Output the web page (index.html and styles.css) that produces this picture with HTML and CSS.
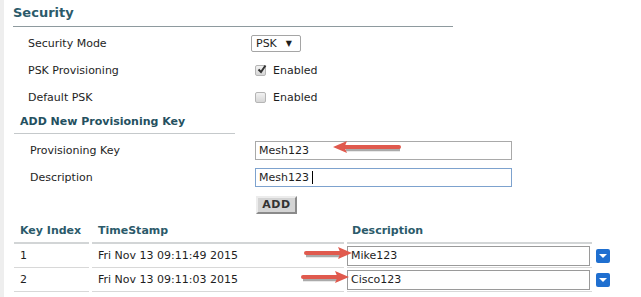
FILE: index.html
```html
<!DOCTYPE html>
<html lang="en">
<head>
    <meta charset="UTF-8">
    <title>Mesh - Security</title>
    <link rel="stylesheet" href="styles.css">
</head>
<body>
    <div class="page">
        <div class="section">
            <h2>Security</h2>
            <div class="form">
                <div class="row">
                    <span class="label">Security Mode</span>
                    <span class="select">PSK <span class="caret">&#9660;</span></span>
                </div>
                <div class="row">
                    <span class="label">PSK Provisioning</span>
                    <label class="check"><span class="box checked"><svg viewBox="0 0 12 12" width="12" height="12"><path d="M2.5 6.5 L5 9 L9.5 2.5" fill="none" stroke="#333" stroke-width="2"/></svg></span>Enabled</label>
                </div>
                <div class="row">
                    <span class="label">Default PSK</span>
                    <label class="check"><span class="box"></span>Enabled</label>
                </div>
            </div>
        </div>

        <div class="subsection">
            <h3>ADD New Provisioning Key</h3>
            <div class="form sub">
                <div class="row">
                    <span class="label">Provisioning Key</span>
                    <span class="input">Mesh123</span>
                </div>
                <div class="row">
                    <span class="label">Description</span>
                    <span class="input focused">Mesh123 <span class="cursor"></span></span>
                </div>
                <div class="row">
                    <span class="label"></span>
                    <span class="button">ADD</span>
                </div>
            </div>
        </div>

        <div class="keys">
            <div class="th">Key Index</div>
            <div class="th">TimeStamp</div>
            <div class="th">Description</div>
            <div class="blank"></div>

            <div class="td">1</div>
            <div class="td">Fri Nov 13 09:11:49 2015</div>
            <div class="td"><span class="input cell">Mike123</span></div>
            <div class="more"><span class="drop"></span></div>

            <div class="td">2</div>
            <div class="td">Fri Nov 13 09:11:03 2015</div>
            <div class="td"><span class="input cell">Cisco123</span></div>
            <div class="more"><span class="drop"></span></div>
        </div>

        <!-- annotation arrows -->
        <svg class="arrow arrow-left" width="72" height="16" viewBox="0 0 72 16">
            <path d="M14 9.5 L68 9.5" stroke="#444" stroke-width="3.5" opacity="0.45"/>
            <path d="M11 7 L67 7" stroke="#e05a4e" stroke-width="4" stroke-linecap="round"/>
            <path d="M1 7 L15 1 L12.5 7 L15 13 Z" fill="#e05a4e"/>
        </svg>
        <svg class="arrow arrow-r1" width="50" height="16" viewBox="0 0 50 16">
            <path d="M3 9.5 L38 9.5" stroke="#444" stroke-width="3.5" opacity="0.45"/>
            <path d="M3 7 L38 7" stroke="#e05a4e" stroke-width="4" stroke-linecap="round"/>
            <path d="M49 7 L35 1 L37.5 7 L35 13 Z" fill="#e05a4e"/>
        </svg>
        <svg class="arrow arrow-r2" width="50" height="16" viewBox="0 0 50 16">
            <path d="M3 9.5 L38 9.5" stroke="#444" stroke-width="3.5" opacity="0.45"/>
            <path d="M3 7 L38 7" stroke="#e05a4e" stroke-width="4" stroke-linecap="round"/>
            <path d="M49 7 L35 1 L37.5 7 L35 13 Z" fill="#e05a4e"/>
        </svg>
    </div>
</body>
</html>
```

FILE: styles.css
```css
body {
    margin: 0;
    background-color: #fff;
    font-family: "DejaVu Sans", Verdana, sans-serif;
    font-size: 11px;
    color: #1e1e1e;
}

.page {
    position: relative;
    width: 637px;
    height: 297px;
    border-left: 4px solid #eeeeee;
}

.section {
    margin-left: 9px;
    width: 440px;
}

h2 {
    margin: 0;
    padding: 5px 0 5px 0;
    font-size: 13px;
    line-height: 16px;
    color: #2b5a6a;
    border-bottom: 1px solid #8e9a9e;
}

.form {
    display: grid;
    grid-template-columns: 223px 1fr;
    padding: 3px 0 0 15px;
}

.row {
    display: contents;
}

.row > * {
    height: 27px;
    display: flex;
    align-items: center;
}

.select {
    align-self: center;
    height: 17px !important;
    width: 50px;
    border: 1px solid #a5a5a5;
    border-radius: 2px;
    padding-left: 4px;
    box-sizing: border-box;
    gap: 9px;
}

.caret {
    font-size: 8px;
}

.check {
    gap: 7px;
    padding-left: 4px;
}

.box {
    width: 11px;
    height: 11px;
    border: 1px solid #b5b5b5;
    border-radius: 2px;
    background: linear-gradient(#f2f2f2, #d6d6d6);
    box-sizing: border-box;
    display: flex;
    align-items: center;
    justify-content: center;
}

.box svg {
    margin: -3px -3px 0 0;
}

.subsection {
    margin: 1px 0 0 10px;
}

h3 {
    margin: 0;
    width: 215px;
    padding: 3px 0 4px 6px;
    font-size: 11px;
    line-height: 14px;
    color: #24505f;
    border-bottom: 1px solid #c5c9cb;
}

.form.sub {
    grid-template-columns: 225px 1fr;
    padding: 3px 0 0 16px;
}

.input {
    align-self: center;
    width: 257px;
    height: 19px !important;
    border: 1px solid #a9a9a9;
    padding-left: 3px;
    box-sizing: border-box;
    white-space: pre;
}

.input.focused {
    border-color: #7da2ce;
}

.cursor {
    width: 1px;
    height: 13px;
    background: #000;
}

.button {
    align-self: center;
    justify-content: center;
    width: 41px;
    height: 18px !important;
    box-sizing: border-box;
    margin-left: 1px;
    background: #d4d4d4;
    border: 2px solid;
    border-color: #ececec #8a8a8a #8a8a8a #ececec;
    font-weight: bold;
    color: #333;
    letter-spacing: 0.5px;
}

.keys {
    display: grid;
    grid-template-columns: 75px 252px 245px 20px;
    column-gap: 3px;
    margin: 1px 0 0 10px;
}

.th {
    height: 23px;
    padding: 0 6px;
    display: flex;
    align-items: center;
    font-weight: bold;
    color: #2b5a6a;
    border-bottom: 2px solid #d2d5d6;
}

.th:nth-child(3) {
    padding-left: 5px;
}

.blank {
    height: 23px;
}

.td {
    height: 23px;
    padding: 0 6px;
    display: flex;
    align-items: center;
    border-bottom: 1px solid #d8d8d8;
}

.td:has(.cell) {
    padding: 0;
}

.input.cell {
    width: 243px;
    height: 20px !important;
    display: flex;
    align-items: center;
    border-color: #9a9a9a;
}

.more {
    display: flex;
    align-items: center;
    padding-left: 1px;
}

.drop {
    width: 14px;
    height: 14px;
    border-radius: 2px;
    background: #1f6fd0;
    position: relative;
}

.drop::after {
    content: "";
    position: absolute;
    left: 3px;
    top: 5px;
    border-left: 4px solid transparent;
    border-right: 4px solid transparent;
    border-top: 4px solid #fff;
}

.arrow {
    position: absolute;
}

.arrow-left {
    left: 328px;
    top: 140px;
}

.arrow-r1 {
    left: 299px;
    top: 246px;
}

.arrow-r2 {
    left: 296px;
    top: 270px;
}
```
